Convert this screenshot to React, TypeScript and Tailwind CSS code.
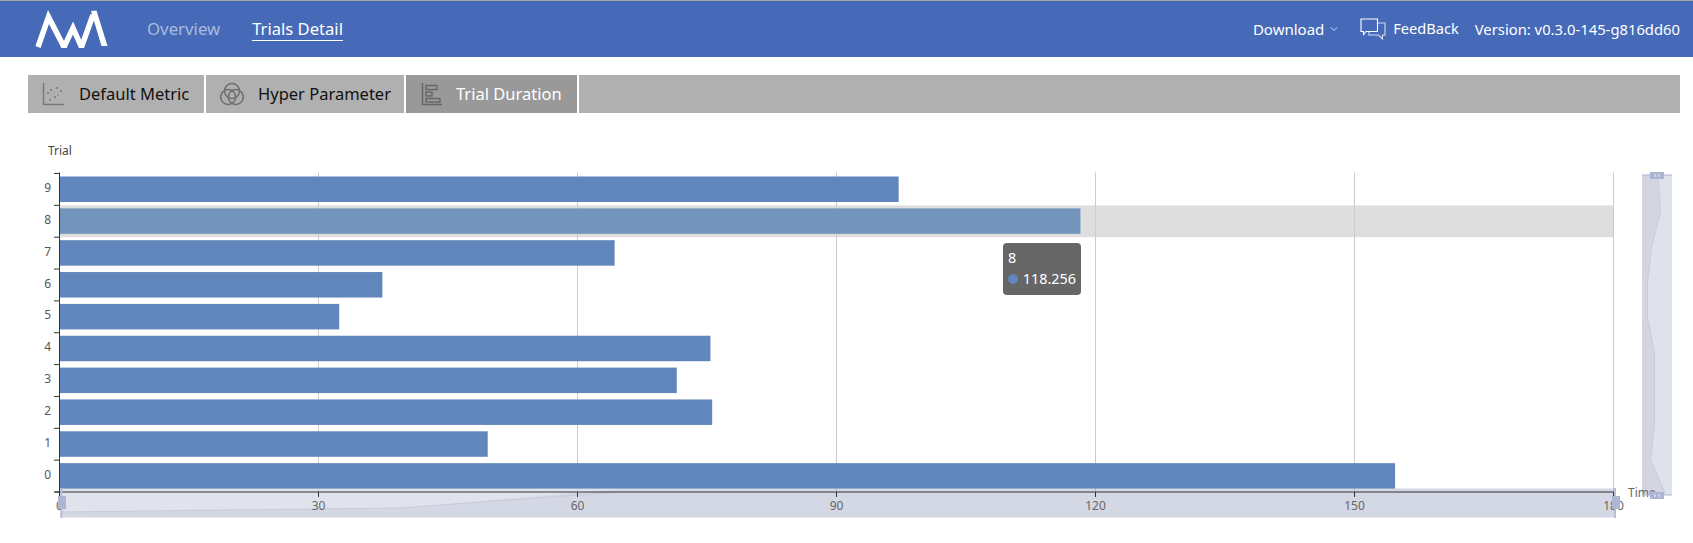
import { ChevronDown } from 'lucide-react';

const bars = [
  { trial: 9, value: 97.2 },
  { trial: 8, value: 118.256 },
  { trial: 7, value: 64.3 },
  { trial: 6, value: 37.4 },
  { trial: 5, value: 32.4 },
  { trial: 4, value: 75.4 },
  { trial: 3, value: 71.5 },
  { trial: 2, value: 75.6 },
  { trial: 1, value: 49.6 },
  { trial: 0, value: 154.7 },
];

// chart geometry, in page pixels (the svg viewBox starts at y=113)
const X0 = 59.5;
const PER_UNIT = 259 / 30;
const TOP = 173.5;
const BAND = 31.85;
const ticks = [0, 30, 60, 90, 120, 150, 180];

function Logo() {
  return (
    <svg width="76" height="38" viewBox="33 9 76 38" className="block">
      <path
        d="M38 46 L48.5 16 L64 46 L73 27 L81.5 46 L93 14"
        fill="none"
        stroke="#fff"
        strokeWidth="5.5"
        strokeMiterlimit="10"
      />
      <path d="M91 10 L96.5 9.5 L107.5 45 L101.5 45 Z" fill="#fff" />
    </svg>
  );
}

function ScatterIcon() {
  return (
    <svg width="22" height="24" viewBox="0 0 22 24" fill="none" stroke="#777" className="block">
      <path d="M1.5 1 V22.5 H22" strokeWidth="1.4" />
      <g fill="#777" stroke="none">
        <circle cx="9" cy="8" r="1" />
        <circle cx="15" cy="6" r="1" />
        <circle cx="19" cy="9" r="1" />
        <circle cx="6" cy="11" r="1" />
        <circle cx="13" cy="15" r="1" />
        <circle cx="8" cy="18" r="1" />
        <circle cx="16" cy="13" r="0.8" />
      </g>
    </svg>
  );
}

function VennIcon() {
  return (
    <svg width="24" height="24" viewBox="0 0 24 24" fill="none" stroke="#6f6f6f" strokeWidth="1.6" className="block">
      <circle cx="12" cy="9" r="7.5" />
      <circle cx="8.2" cy="15" r="7.5" />
      <circle cx="15.8" cy="15" r="7.5" />
    </svg>
  );
}

function DurationIcon() {
  return (
    <svg width="22" height="24" viewBox="0 0 22 24" fill="none" stroke="#666" strokeWidth="1.4" className="block">
      <path d="M1.5 1 V22.5 H21" />
      <rect x="5" y="3.5" width="11" height="4" />
      <rect x="5" y="10" width="6" height="4" />
      <rect x="5" y="16.5" width="14" height="3.5" />
    </svg>
  );
}

function ChatIcon() {
  return (
    <svg width="26" height="22" viewBox="0 0 26 22" fill="none" stroke="#fff" strokeWidth="1.1" className="block">
      <path d="M1 1 H17.5 V13.5 H6 L3.5 16.5 V13.5 H1 Z" />
      <path d="M17.5 5 H25 V17 H22.5 V21 L18.5 17 H9 V13.5" stroke="#d5dcef" />
    </svg>
  );
}

function Tab({
  label,
  icon,
  active,
  className,
}: {
  label: string;
  icon: React.ReactNode;
  active?: boolean;
  className: string;
}) {
  return (
    <div
      className={`flex items-center h-full ${active ? 'bg-[#999999] text-white' : 'bg-[#b0b0b0] text-[#111]'} ${className}`}
    >
      {icon}
      <span className="text-[16.5px] leading-none">{label}</span>
    </div>
  );
}

function Chart() {
  return (
    <svg width="1693" height="430" viewBox="0 113 1693 430" className="block" fontFamily="'Noto Sans', sans-serif">
      <text x="48" y="155" fontSize="12" fill="#444">Trial</text>

      {/* hovered band */}
      <rect x={X0} y={TOP + BAND} width={1613 - X0} height={BAND} fill="#dedede" />

      {/* grid */}
      {ticks.slice(1).map((t) => (
        <line key={t} x1={X0 + t * PER_UNIT} x2={X0 + t * PER_UNIT} y1={TOP - 1} y2={492} stroke="#ccc" />
      ))}

      {/* bars */}
      {bars.map((b, i) => (
        <rect
          key={b.trial}
          x={X0}
          y={TOP + i * BAND + 3}
          width={b.value * PER_UNIT}
          height={BAND * 0.8}
          fill={b.trial === 8 ? '#7395bc' : '#6186bb'}
        />
      ))}

      {/* bottom zoom slider, under the axis labels */}
      <rect x="60" y="488.5" width="1555" height="29" fill="#8d95b8" fillOpacity="0.38" />
      <path d="M61 489 H620 L400 508 L61 512 Z" fill="#fff" fillOpacity="0.3" />
      <path d="M61 512 L400 508 L620 492" fill="none" stroke="#c8cbda" />

      {/* y axis */}
      <line x1={X0} x2={X0} y1={TOP - 1} y2={492} stroke="#333" />
      {Array.from({ length: 11 }).map((_, i) => (
        <line key={i} x1={54} x2={X0} y1={TOP + i * BAND} y2={TOP + i * BAND} stroke="#333" />
      ))}
      {bars.map((b, i) => (
        <text key={b.trial} x="51" y={TOP + i * BAND + 18.5} fontSize="12" fill="#555" textAnchor="end">
          {b.trial}
        </text>
      ))}

      {/* x axis */}
      <line x1={X0 - 5} x2={1613.5} y1={492} y2={492} stroke="#333" />
      {ticks.map((t) => (
        <line key={t} x1={X0 + t * PER_UNIT} x2={X0 + t * PER_UNIT} y1={492} y2={497} stroke="#333" />
      ))}
      {ticks.map((t) => (
        <text key={t} x={X0 + t * PER_UNIT} y="510" fontSize="12" fill="#666" textAnchor="middle">
          {t}
        </text>
      ))}

      {/* right zoom slider */}
      <rect x="1642" y="175" width="30" height="320" fill="#dfe1eb" />
      <path
        d="M1642 175 H1658 L1660.5 212 L1651.5 247 L1647.5 283 L1647.5 317 L1654.5 353 L1654.5 423 L1650.5 460 L1665 493 V495 H1642 Z"
        fill="#d3d6e2"
      />
      <path
        d="M1658 175 L1660.5 212 L1651.5 247 L1647.5 283 L1647.5 317 L1654.5 353 L1654.5 423 L1650.5 460 L1665 493"
        fill="none"
        stroke="#c8cbda"
      />
      <text x="1628" y="497" fontSize="12" fill="#666">Time</text>

      {/* slider handles */}
      <line x1="61.5" x2="61.5" y1="488" y2="518" stroke="#b8bfd8" strokeWidth="2" />
      <rect x="58" y="496" width="8" height="13" fill="#acb5d2" />
      <line x1="1615" x2="1615" y1="488" y2="518" stroke="#b8bfd8" strokeWidth="2" />
      <rect x="1612" y="496" width="8" height="13" fill="#acb5d2" />
      <line x1="1642" x2="1672" y1="175" y2="175" stroke="#acb5d2" />
      <line x1="1642" x2="1672" y1="495" y2="495" stroke="#acb5d2" />
      <rect x="1650" y="172" width="14" height="7" fill="#acb5d2" />
      <rect x="1650" y="492" width="14" height="7" fill="#acb5d2" />
      <path d="M1655 174 V177 M1659 174 V177 M1655 494 V497 M1659 494 V497" stroke="#e8eaf2" />
    </svg>
  );
}

export default function App() {
  return (
    <div className="w-[1693px] h-[543px] overflow-hidden bg-white font-['Noto_Sans',sans-serif]">
      <header className="h-[57px] flex items-center bg-[#4669b8] border-t border-[#a8a8a8] text-white">
        <div className="ml-[33px] w-[76px]">
          <Logo />
        </div>
        <span className="ml-[38px] text-[16.8px] text-[#a9bcdc]">Overview</span>
        <span className="ml-[32px] text-[16.6px] leading-[22px] border-b border-white">Trials Detail</span>
        <div className="ml-auto flex items-center text-[15px] pr-[13px]">
          <span>Download</span>
          <ChevronDown size={12} strokeWidth={1.4} className="ml-[4px] text-white" />
          <div className="ml-[20px]">
            <ChatIcon />
          </div>
          <span className="ml-[7px] text-[14.6px]">FeedBack</span>
          <span className="ml-[16px] text-[14.8px]">Version: v0.3.0-145-g816dd60</span>
        </div>
      </header>

      <div className="mt-[18px] mx-[28px] mr-[13px] h-[38px] flex gap-[2px]">
        <Tab
          label="Default Metric"
          icon={<ScatterIcon />}
          className="w-[176px] pl-[14px] gap-[15px]"
        />
        <Tab
          label="Hyper Parameter"
          icon={<VennIcon />}
          className="w-[198px] pl-[14px] gap-[14px]"
        />
        <Tab
          label="Trial Duration"
          icon={<DurationIcon />}
          active
          className="w-[171px] pl-[15px] gap-[13px]"
        />
        <div className="flex-1 bg-[#b0b0b0]" />
      </div>

      <div className="relative">
        <Chart />
        <div className="absolute left-[1003px] top-[130px] w-[78px] h-[52px] rounded-[4px] bg-[#666666] text-white text-[14.4px] leading-[21px] px-[5px] py-[4px]">
          <div>8</div>
          <div className="flex items-center gap-[5px] whitespace-nowrap">
            <span className="w-[10px] h-[10px] rounded-full bg-[#6186bb]" />
            118.256
          </div>
        </div>
      </div>
    </div>
  );
}
